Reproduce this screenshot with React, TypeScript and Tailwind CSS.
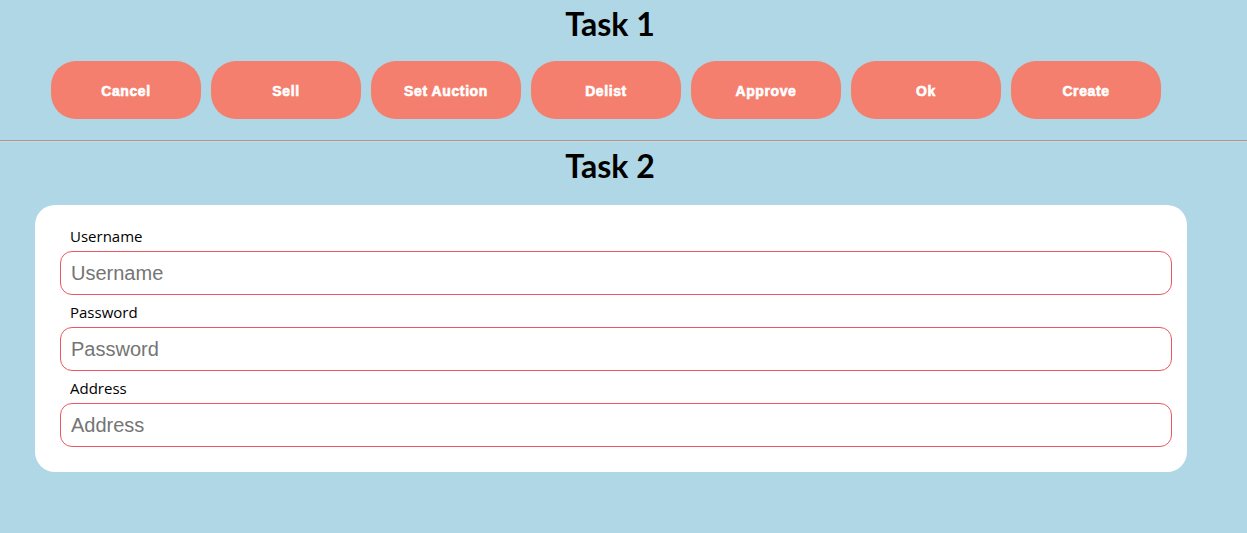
const buttons = ['Cancel', 'Sell', 'Set Auction', 'Delist', 'Approve', 'Ok', 'Create']

const fields = ['Username', 'Password', 'Address']

export default function App() {
  return (
    <div className="min-h-[533px] bg-[#afd7e6] font-['Open_Sans',sans-serif]">
      {/* Task 1 */}
      <h1 className="w-[1220px] pt-[2px] text-center font-['Lato',sans-serif] text-[32px] font-bold leading-[44px] text-black">
        Task 1
      </h1>
      <div className="flex gap-[10px] pl-[51px] pt-[15px]">
        {buttons.map((b) => (
          <button
            key={b}
            className="h-[58px] w-[150px] rounded-[25px] bg-[#f57f6e] pt-[3px] font-['Liberation_Sans',Arial,sans-serif] text-[14px] font-bold tracking-[0.6px] text-white [-webkit-text-stroke:0.6px_white]"
          >
            {b}
          </button>
        ))}
      </div>
      <div className="mt-[21px] h-[1px] bg-[#9c9c9c]" />
      <div className="h-[1px] bg-[#d6d6d6]" />

      {/* Task 2 */}
      <h1 className="w-[1220px] pt-[2px] text-center font-['Lato',sans-serif] text-[32px] font-bold leading-[44px] text-black">
        Task 2
      </h1>
      <div className="ml-[35px] mt-[17px] w-[1152px] rounded-[20px] bg-white pb-[25px] pl-[25px] pr-[15px] pt-[20px]">
        {fields.map((f, i) => (
          <div key={f} className={i > 0 ? 'mt-[6px] flex flex-col' : 'flex flex-col'}>
            <label className="mb-[4px] ml-[10px] text-[15px] leading-[22px] text-black">{f}</label>
            <input
              type="text"
              placeholder={f}
              className="h-[44px] rounded-[12px] border border-[#ec5564] px-[10px] font-['Liberation_Sans',Arial,sans-serif] text-[20px] text-black placeholder:text-[#757575] focus:outline-none"
            />
          </div>
        ))}
      </div>
    </div>
  )
}
